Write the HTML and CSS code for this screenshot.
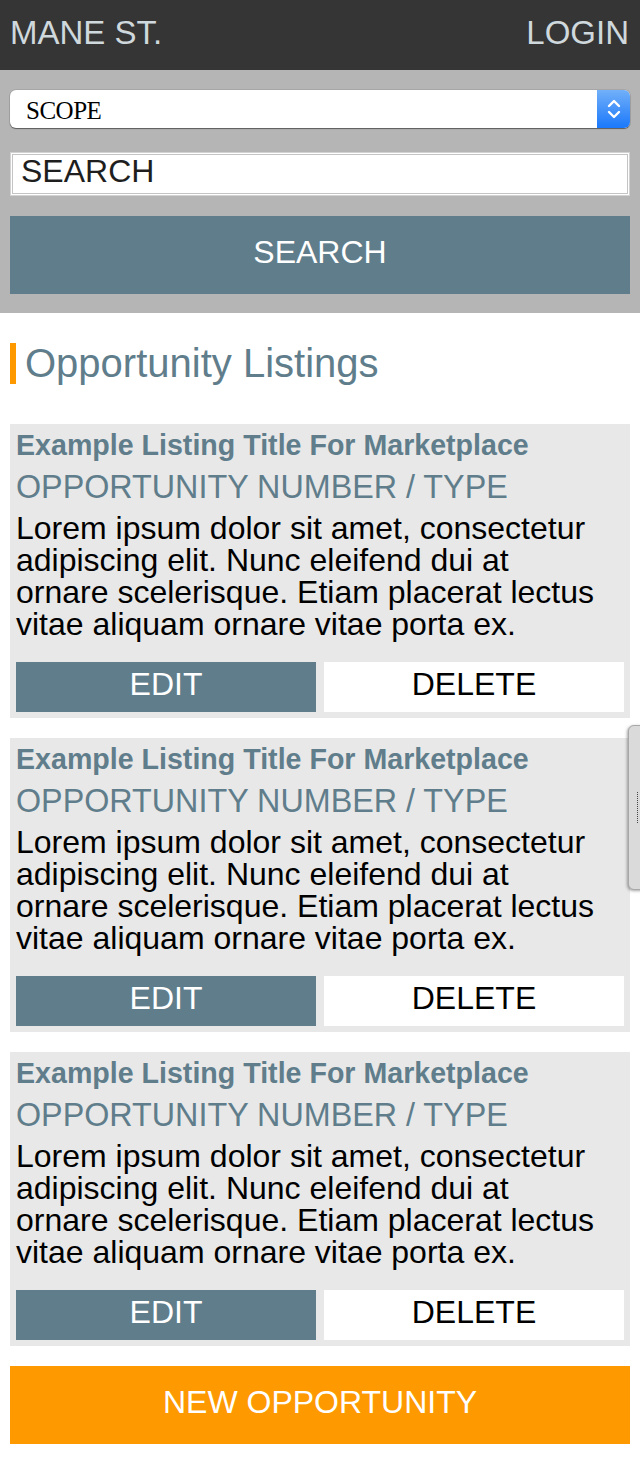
FILE: index.html
```html
<!DOCTYPE html>
<html lang="en">
<head>
<meta charset="utf-8">
<title>Mane St. – Opportunity Listings</title>
<link rel="stylesheet" href="styles.css">
</head>
<body>
<header class="topbar">
  <div class="brand">MANE ST.</div>
  <div class="login">LOGIN</div>
</header>

<section class="search-panel">
  <div class="select">
    <span class="select-label">SCOPE</span>
    <span class="select-arrows">
      <svg width="14" height="24" viewBox="0 0 14 24" aria-hidden="true">
        <path d="M2 9 L7 4 L12 9" fill="none" stroke="#fff" stroke-width="2.4" stroke-linecap="round" stroke-linejoin="round"/>
        <path d="M2 15 L7 20 L12 15" fill="none" stroke="#fff" stroke-width="2.4" stroke-linecap="round" stroke-linejoin="round"/>
      </svg>
    </span>
  </div>
  <input class="search-input" type="text" value="SEARCH">
  <button class="btn btn-search">SEARCH</button>
</section>

<main class="content">
  <h2 class="section-title">Opportunity Listings</h2>

  <article class="card">
    <h3 class="card-title">Example Listing Title For Marketplace</h3>
    <div class="card-sub">OPPORTUNITY NUMBER / TYPE</div>
    <p class="card-text">Lorem ipsum dolor sit amet, consectetur adipiscing elit. Nunc eleifend dui at ornare scelerisque. Etiam placerat lectus vitae aliquam ornare vitae porta ex.</p>
    <div class="card-actions">
      <button class="btn btn-edit">EDIT</button>
      <button class="btn btn-delete">DELETE</button>
    </div>
  </article>

  <article class="card">
    <h3 class="card-title">Example Listing Title For Marketplace</h3>
    <div class="card-sub">OPPORTUNITY NUMBER / TYPE</div>
    <p class="card-text">Lorem ipsum dolor sit amet, consectetur adipiscing elit. Nunc eleifend dui at ornare scelerisque. Etiam placerat lectus vitae aliquam ornare vitae porta ex.</p>
    <div class="card-actions">
      <button class="btn btn-edit">EDIT</button>
      <button class="btn btn-delete">DELETE</button>
    </div>
  </article>

  <article class="card">
    <h3 class="card-title">Example Listing Title For Marketplace</h3>
    <div class="card-sub">OPPORTUNITY NUMBER / TYPE</div>
    <p class="card-text">Lorem ipsum dolor sit amet, consectetur adipiscing elit. Nunc eleifend dui at ornare scelerisque. Etiam placerat lectus vitae aliquam ornare vitae porta ex.</p>
    <div class="card-actions">
      <button class="btn btn-edit">EDIT</button>
      <button class="btn btn-delete">DELETE</button>
    </div>
  </article>

  <button class="btn btn-new">NEW OPPORTUNITY</button>
</main>

<div class="scroll-tab" aria-hidden="true"><span class="scroll-grip"></span></div>
</body>
</html>
```

FILE: styles.css
```css
* {
  box-sizing: border-box;
}

html, body {
  margin: 0;
  padding: 0;
  background: #ffffff;
}

body {
  font-family: "Liberation Sans", Arial, Helvetica, sans-serif;
  color: #000;
  width: 640px;
  min-height: 1462px;
  position: relative;
  overflow: hidden;
}

/* Top bar */
.topbar {
  height: 70px;
  background: #353535;
  display: flex;
  justify-content: space-between;
  align-items: flex-start;
  padding: 14px 11px 0 10px;
  font-size: 33px;
  line-height: 37px;
  color: #cfd8dc;
}

/* Search panel */
.search-panel {
  background: #b5b5b5;
  padding: 20px 10px 19px;
  display: flex;
  flex-direction: column;
}

.select {
  height: 38px;
  background: #fff;
  border-radius: 6px;
  box-shadow: 0 1px 1px rgba(0, 0, 0, 0.45), 0 0 0 1px rgba(0, 0, 0, 0.08);
  display: flex;
  align-items: center;
  justify-content: space-between;
  overflow: hidden;
}

.select-label {
  font-family: "Liberation Serif", "Times New Roman", serif;
  font-size: 25px;
  padding: 4px 0 0 16px;
  letter-spacing: -0.5px;
  color: #000;
}

.select-arrows {
  width: 33px;
  height: 38px;
  background: linear-gradient(#72b0f9, #1a78fb);
  display: flex;
  align-items: center;
  justify-content: center;
}

.search-input {
  margin: 24px 0 0;
  height: 44px;
  width: 100%;
  border: 1px solid #d2d2d2;
  box-shadow: inset 0 0 0 1px #fff, inset 0 0 0 2px #c4c4c4;
  background: #fff;
  padding: 0 10px 5px;
  font-family: "Liberation Sans", Arial, sans-serif;
  font-size: 32px;
  color: #1e1e1e;
  outline: none;
  border-radius: 0;
}

.btn {
  font-family: "Liberation Sans", Arial, sans-serif;
  font-size: 32px;
  border: 0;
  margin: 0;
  border-radius: 0;
  display: flex;
  align-items: center;
  justify-content: center;
  cursor: pointer;
  padding: 0 0 6px;
}

.btn-search {
  margin-top: 20px;
  height: 78px;
  width: 100%;
  background: #607d8b;
  color: #fff;
}

/* Content */
.content {
  padding: 30px 10px 18px;
  display: flex;
  flex-direction: column;
}

.section-title {
  margin: 0 0 40px;
  border-left: 6px solid #ff9900;
  padding-left: 9px;
  font-size: 40px;
  line-height: 41px;
  font-weight: normal;
  color: #607d8b;
}

.card {
  background: #e8e8e8;
  padding: 4px 6px 6px;
  margin-bottom: 20px;
  display: flex;
  flex-direction: column;
}

.card-title {
  margin: 0;
  font-size: 28.6px;
  line-height: 34px;
  font-weight: bold;
  color: #607d8b;
}

.card-sub {
  margin-top: 7px;
  font-size: 32.3px;
  line-height: 36px;
  color: #607d8b;
}

.card-text {
  margin: 7px 0 0;
  padding-right: 20px;
  font-size: 32px;
  line-height: 32px;
  color: #000;
}

.card-actions {
  margin-top: 22px;
  display: flex;
  gap: 8px;
}

.card-actions .btn {
  flex: 1 1 0;
  height: 50px;
}

.btn-edit {
  background: #607d8b;
  color: #fff;
}

.btn-delete {
  background: #fff;
  color: #000;
}

.btn-new {
  height: 78px;
  width: 100%;
  background: #ff9900;
  color: #fff;
}

/* Overlay pull tab at right edge */
.scroll-tab {
  position: absolute;
  left: 628px;
  top: 725px;
  width: 20px;
  height: 165px;
  background: #dadada;
  border: 1px solid #a8a8a8;
  border-radius: 6px;
  box-shadow: -1px 1px 3px rgba(0, 0, 0, 0.35);
}

.scroll-grip {
  position: absolute;
  left: 8px;
  top: 66px;
  height: 31px;
  border-left: 1px dotted #444;
}
```
